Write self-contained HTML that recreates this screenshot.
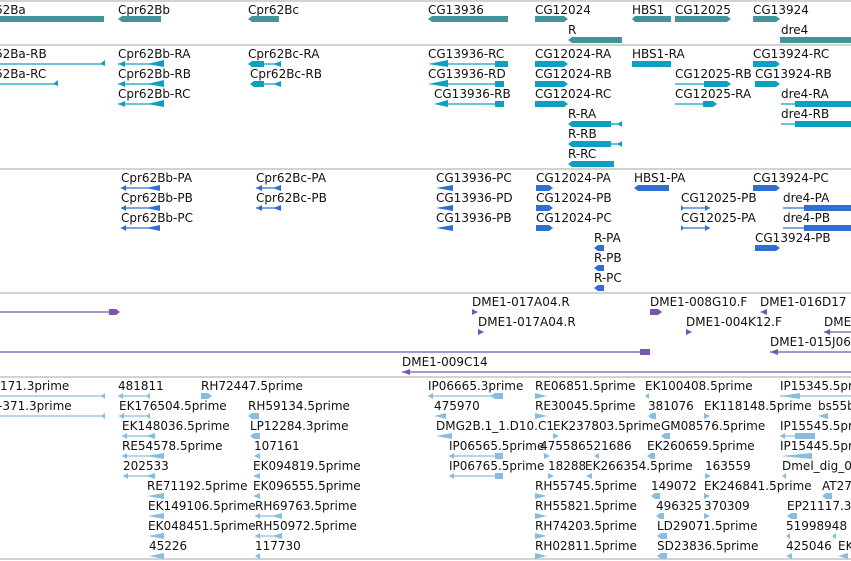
<!DOCTYPE html>
<html><head><meta charset="utf-8"><style>
html,body{margin:0;padding:0;background:#fff;width:851px;height:561px;overflow:hidden}
svg{display:block}
text{font-family:"DejaVu Sans","Liberation Sans",sans-serif;font-size:12px;fill:#111}
.g{fill:#43939a}.t{fill:#0da0c0}.p{fill:#2f6fd4}.v{fill:#7755b0}.e{fill:#88bde0}
.tl{stroke:#0da0c0;stroke-width:1.3}.pl{stroke:#2f6fd4;stroke-width:1.3}.vl{stroke:#7755b0;stroke-width:1.3}.el{stroke:#88bde0;stroke-width:1.3}
.s{stroke:#c4c4c4;stroke-width:1.5}
</style></head><body>
<svg width="851" height="561" viewBox="0 0 851 561">
<line class="s" x1="0" y1="1" x2="851" y2="1"/>
<line class="s" x1="0" y1="45" x2="851" y2="45"/>
<line class="s" x1="0" y1="169" x2="851" y2="169"/>
<line class="s" x1="0" y1="293" x2="851" y2="293"/>
<line class="s" x1="0" y1="377" x2="851" y2="377"/>
<line class="s" x1="0" y1="559" x2="851" y2="559"/>

<!-- Track 1 genes -->
<text x="-26" y="14">Cpr62Ba</text><rect class="g" x="0" y="16" width="104" height="6"/>
<text x="118" y="14">Cpr62Bb</text><polygon class="g" points="118,19 122,16 161,16 161,22 122,22"/>
<text x="248" y="14">Cpr62Bc</text><polygon class="g" points="248,19 252,16 279,16 279,22 252,22"/>
<text x="428" y="14">CG13936</text><polygon class="g" points="428,19 432,16 508,16 508,22 432,22"/>
<text x="535" y="14">CG12024</text><polygon class="g" points="535,16 564,16 568,19 564,22 535,22"/>
<text x="568" y="34">R</text><polygon class="g" points="568,40 572,37 622,37 622,43 572,43"/>
<text x="632" y="14">HBS1</text><polygon class="g" points="632,19 635,16 671,16 671,22 635,22"/>
<text x="675" y="14">CG12025</text><polygon class="g" points="675,16 727,16 731,19 727,22 675,22"/>
<text x="753" y="14">CG13924</text><polygon class="g" points="753,16 776,16 780,19 776,22 753,22"/>
<text x="781" y="34">dre4</text><rect class="g" x="780" y="37" width="71" height="6"/>

<!-- Track 2 transcripts -->
<text x="-26" y="58">Cpr62Ba-RB</text><line class="tl" x1="0" y1="64" x2="104" y2="64"/><polygon class="t" points="100,64 105,60 105,66"/>
<text x="-26" y="78">Cpr62Ba-RC</text><line class="tl" x1="0" y1="84" x2="57" y2="84"/><polygon class="t" points="53,84 58,80 58,86"/>
<text x="118" y="58">Cpr62Bb-RA</text><line class="tl" x1="118" y1="64" x2="164" y2="64"/><polygon class="t" points="118,64 125,61 125,67"/><polygon class="t" points="147,64 164,60 164,67"/>
<text x="118" y="78">Cpr62Bb-RB</text><line class="tl" x1="118" y1="84" x2="164" y2="84"/><polygon class="t" points="118,84 125,81 125,87"/><polygon class="t" points="147,84 164,80 164,87"/>
<text x="118" y="98">Cpr62Bb-RC</text><line class="tl" x1="118" y1="104" x2="164" y2="104"/><polygon class="t" points="118,104 125,101 125,107"/><polygon class="t" points="147,104 164,100 164,107"/>
<text x="248" y="58">Cpr62Bc-RA</text><polygon class="t" points="248,64 252,61 264,61 264,67 252,67"/><line class="tl" x1="264" y1="64" x2="281" y2="64"/><polygon class="t" points="273,64 281,61 281,67"/>
<text x="250" y="78">Cpr62Bc-RB</text><polygon class="t" points="250,84 254,81 264,81 264,87 254,87"/><line class="tl" x1="264" y1="84" x2="281" y2="84"/><polygon class="t" points="273,84 281,81 281,87"/>
<text x="428" y="58">CG13936-RC</text><polygon class="t" points="428,64 448,60 448,67"/><line class="tl" x1="448" y1="64" x2="495" y2="64"/><rect class="t" x="495" y="61" width="13" height="6"/>
<text x="428" y="78">CG13936-RD</text><polygon class="t" points="428,84 448,80 448,87"/><line class="tl" x1="448" y1="84" x2="495" y2="84"/><rect class="t" x="495" y="81" width="9" height="6"/>
<text x="434" y="98">CG13936-RB</text><polygon class="t" points="434,104 448,100 448,107"/><line class="tl" x1="448" y1="104" x2="495" y2="104"/><rect class="t" x="495" y="101" width="9" height="6"/>
<text x="535" y="58">CG12024-RA</text><polygon class="t" points="535,61 564,61 568,64 564,67 535,67"/>
<text x="535" y="78">CG12024-RB</text><polygon class="t" points="535,81 564,81 568,84 564,87 535,87"/>
<text x="535" y="98">CG12024-RC</text><polygon class="t" points="535,101 564,101 568,104 564,107 535,107"/>
<text x="568" y="118">R-RA</text><polygon class="t" points="568,124 572,121 611,121 611,127 572,127"/><line class="tl" x1="611" y1="124" x2="622" y2="124"/><polygon class="t" points="617,124 622,121 622,127"/>
<text x="568" y="138">R-RB</text><polygon class="t" points="568,144 572,141 611,141 611,147 572,147"/><line class="tl" x1="611" y1="144" x2="622" y2="144"/><polygon class="t" points="617,144 622,141 622,147"/>
<text x="568" y="158">R-RC</text><polygon class="t" points="568,164 572,161 614,161 614,167 572,167"/>
<text x="632" y="58">HBS1-RA</text><rect class="t" x="632" y="61" width="39" height="6"/>
<text x="675" y="78">CG12025-RB</text><line class="tl" x1="675" y1="84" x2="704" y2="84"/><polygon class="t" points="704,81 727,81 731,84 727,87 704,87"/>
<text x="675" y="98">CG12025-RA</text><line class="tl" x1="675" y1="104" x2="703" y2="104"/><polygon class="t" points="703,101 713,101 717,104 713,107 703,107"/>
<text x="753" y="58">CG13924-RC</text><polygon class="t" points="753,61 776,61 780,64 776,67 753,67"/>
<text x="755" y="78">CG13924-RB</text><polygon class="t" points="755,81 776,81 780,84 776,87 755,87"/>
<text x="781" y="98">dre4-RA</text><line class="tl" x1="781" y1="104" x2="851" y2="104"/><rect class="t" x="795" y="101" width="56" height="6"/>
<text x="781" y="118">dre4-RB</text><line class="tl" x1="781" y1="124" x2="851" y2="124"/><rect class="t" x="795" y="121" width="56" height="6"/>

<!-- Track 3 proteins -->
<text x="121" y="182">Cpr62Bb-PA</text><line class="pl" x1="121" y1="188" x2="160" y2="188"/><polygon class="p" points="121,188 126,185 126,191"/><polygon class="p" points="146,188 160,185 160,191"/>
<text x="121" y="202">Cpr62Bb-PB</text><line class="pl" x1="121" y1="208" x2="160" y2="208"/><polygon class="p" points="121,208 126,205 126,211"/><polygon class="p" points="146,208 160,205 160,211"/>
<text x="121" y="222">Cpr62Bb-PC</text><line class="pl" x1="121" y1="228" x2="160" y2="228"/><polygon class="p" points="121,228 126,225 126,231"/><polygon class="p" points="146,228 160,225 160,231"/>
<text x="256" y="182">Cpr62Bc-PA</text><line class="pl" x1="256" y1="188" x2="281" y2="188"/><polygon class="p" points="256,188 262,185 262,191"/><polygon class="p" points="273,188 281,185 281,191"/>
<text x="256" y="202">Cpr62Bc-PB</text><line class="pl" x1="256" y1="208" x2="281" y2="208"/><polygon class="p" points="256,208 262,205 262,211"/><polygon class="p" points="273,208 281,205 281,211"/>
<text x="436" y="182">CG13936-PC</text><polygon class="p" points="436,188 453,185 453,191"/>
<text x="436" y="202">CG13936-PD</text><polygon class="p" points="436,208 453,205 453,211"/>
<text x="436" y="222">CG13936-PB</text><polygon class="p" points="436,228 453,225 453,231"/>
<text x="536" y="182">CG12024-PA</text><polygon class="p" points="536,185 549,185 553,188 549,191 536,191"/>
<text x="536" y="202">CG12024-PB</text><polygon class="p" points="536,205 549,205 553,208 549,211 536,211"/>
<text x="536" y="222">CG12024-PC</text><polygon class="p" points="536,225 549,225 553,228 549,231 536,231"/>
<text x="594" y="242">R-PA</text><polygon class="p" points="594,248 598,245 604,245 604,251 598,251"/>
<text x="594" y="262">R-PB</text><polygon class="p" points="594,268 598,265 604,265 604,271 598,271"/>
<text x="594" y="282">R-PC</text><polygon class="p" points="594,288 598,285 604,285 604,291 598,291"/>
<text x="634" y="182">HBS1-PA</text><polygon class="p" points="634,188 638,185 669,185 669,191 638,191"/>
<text x="681" y="202">CG12025-PB</text><line class="pl" x1="681" y1="208" x2="710" y2="208"/><polygon class="p" points="681,205 684,208 681,211"/><polygon class="p" points="705,205 710,208 705,211"/>
<text x="681" y="222">CG12025-PA</text><line class="pl" x1="681" y1="228" x2="710" y2="228"/><polygon class="p" points="681,225 684,228 681,231"/><polygon class="p" points="705,225 710,228 705,231"/>
<text x="753" y="182">CG13924-PC</text><polygon class="p" points="753,185 776,185 780,188 776,191 753,191"/>
<text x="783" y="202">dre4-PA</text><line class="pl" x1="783" y1="208" x2="851" y2="208"/><rect class="p" x="804" y="205" width="47" height="6"/>
<text x="783" y="222">dre4-PB</text><line class="pl" x1="783" y1="228" x2="851" y2="228"/><rect class="p" x="804" y="225" width="47" height="6"/>
<text x="755" y="242">CG13924-PB</text><polygon class="p" points="755,245 776,245 780,248 776,251 755,251"/>

<!-- Track 4 purple -->
<line class="vl" x1="0" y1="312" x2="115" y2="312"/><polygon class="v" points="109,309 116,309 120,312 116,315 109,315"/>
<text x="472" y="306">DME1-017A04.R</text><polygon class="v" points="472,309 478,312 472,315"/>
<text x="478" y="326">DME1-017A04.R</text><polygon class="v" points="478,329 484,332 478,335"/>
<text x="650" y="306">DME1-008G10.F</text><polygon class="v" points="650,309 658,309 662,312 658,315 650,315"/>
<text x="760" y="306">DME1-016D17</text><polygon class="v" points="760,312 767,309 767,315"/>
<text x="686" y="326">DME1-004K12.F</text><polygon class="v" points="686,329 692,332 686,335"/>
<text x="824" y="326">DME1-015J06</text><line class="vl" x1="824" y1="332" x2="851" y2="332"/><polygon class="v" points="824,332 830,329 830,335"/>
<line class="vl" x1="0" y1="352" x2="645" y2="352"/><polygon class="v" points="640,349 650,349 650,355 640,355"/>
<text x="770" y="346">DME1-015J06</text><line class="vl" x1="770" y1="352" x2="851" y2="352"/><polygon class="v" points="770,352 778,349 778,355"/>
<text x="402" y="366">DME1-009C14</text><line class="vl" x1="402" y1="372" x2="851" y2="372"/><polygon class="v" points="402,372 410,369 410,375"/>

<!-- Track 5 ESTs -->
<text x="0" y="390">171.3prime</text><line class="el" x1="0" y1="396" x2="105" y2="396"/><polygon class="e" points="101,396 105,393 105,399"/>
<text x="-2" y="410">-371.3prime</text><line class="el" x1="0" y1="416" x2="105" y2="416"/><polygon class="e" points="101,416 105,413 105,419"/>
<text x="118" y="390">481811</text><line class="el" x1="118" y1="396" x2="150" y2="396"/><polygon class="e" points="118,396 123,393 123,399"/><polygon class="e" points="146,396 150,393 150,399"/>
<text x="119" y="410">EK176504.5prime</text><line class="el" x1="119" y1="416" x2="150" y2="416"/><polygon class="e" points="119,416 124,413 124,419"/><polygon class="e" points="146,416 150,413 150,419"/>
<text x="122" y="430">EK148036.5prime</text><line class="el" x1="122" y1="436" x2="155" y2="436"/><polygon class="e" points="122,436 127,433 127,439"/><polygon class="e" points="146,436 155,433 155,439"/>
<text x="122" y="450">RE54578.5prime</text><line class="el" x1="122" y1="456" x2="164" y2="456"/><polygon class="e" points="122,456 127,453 127,459"/><polygon class="e" points="146,456 164,453 164,459"/>
<text x="123" y="470">202533</text><line class="el" x1="123" y1="476" x2="155" y2="476"/><polygon class="e" points="123,476 128,473 128,479"/><polygon class="e" points="146,476 155,473 155,479"/>
<text x="147" y="490">RE71192.5prime</text><polygon class="e" points="147,496 164,493 164,499"/>
<text x="148" y="510">EK149106.5prime</text><polygon class="e" points="148,516 164,513 164,519"/>
<text x="148" y="530">EK048451.5prime</text><polygon class="e" points="148,536 164,533 164,539"/>
<text x="149" y="550">45226</text><polygon class="e" points="149,556 164,553 164,559"/>
<text x="201" y="390">RH72447.5prime</text><polygon class="e" points="201,393 208,393 212,396 208,399 201,399"/>
<text x="248" y="410">RH59134.5prime</text><polygon class="e" points="248,416 252,413 259,413 259,419 252,419"/>
<text x="250" y="430">LP12284.3prime</text><polygon class="e" points="250,436 254,433 260,433 260,439 254,439"/>
<text x="254" y="450">107161</text><polygon class="e" points="254,456 260,453 260,459"/>
<text x="253" y="470">EK094819.5prime</text><polygon class="e" points="253,476 260,473 260,479"/>
<text x="253" y="490">EK096555.5prime</text><polygon class="e" points="253,496 260,493 260,499"/>
<text x="255" y="510">RH69763.5prime</text><line class="el" x1="255" y1="516" x2="282" y2="516"/><polygon class="e" points="255,516 260,513 260,519"/><polygon class="e" points="272,516 282,513 282,519"/>
<text x="255" y="530">RH50972.5prime</text><line class="el" x1="255" y1="536" x2="282" y2="536"/><polygon class="e" points="255,536 260,533 260,539"/><polygon class="e" points="272,536 282,533 282,539"/>
<text x="255" y="550">117730</text><polygon class="e" points="255,556 260,553 260,559"/>
<text x="428" y="390">IP06665.3prime</text><line class="el" x1="428" y1="396" x2="503" y2="396"/><polygon class="e" points="428,396 433,393 433,399"/><polygon class="e" points="490,396 495,393 503,393 503,399 495,399"/>
<text x="434" y="410">475970</text><polygon class="e" points="434,416 446,413 446,419"/>
<text x="436" y="430">DMG2B.1_1.D10.C1</text><polygon class="e" points="436,436 452,433 452,439"/>
<text x="449" y="450">IP06565.5prime</text><line class="el" x1="449" y1="456" x2="503" y2="456"/><polygon class="e" points="449,456 454,453 454,459"/><rect class="e" x="495" y="453" width="8" height="6"/>
<text x="449" y="470">IP06765.5prime</text><line class="el" x1="449" y1="476" x2="503" y2="476"/><polygon class="e" points="449,476 454,473 454,479"/><rect class="e" x="495" y="473" width="8" height="6"/>
<text x="535" y="390">RE06851.5prime</text><polygon class="e" points="535,393 547,396 535,399"/>
<text x="535" y="410">RE30045.5prime</text><polygon class="e" points="535,413 547,416 535,419"/>
<text x="553" y="430">EK237803.5prime</text><polygon class="e" points="553,433 559,436 553,439"/>
<text x="540" y="450">475586521686</text><polygon class="e" points="544,453 550,456 544,459"/><polygon class="e" points="594,456 599,453 599,459"/>
<text x="548" y="470">18288</text><polygon class="e" points="548,473 554,476 548,479"/>
<text x="585" y="470">EK266354.5prime</text><polygon class="e" points="586,476 592,473 592,479"/>
<text x="535" y="490">RH55745.5prime</text><polygon class="e" points="535,493 547,496 535,499"/>
<text x="535" y="510">RH55821.5prime</text><polygon class="e" points="535,513 547,516 535,519"/>
<text x="535" y="530">RH74203.5prime</text><polygon class="e" points="535,533 547,536 535,539"/>
<text x="535" y="550">RH02811.5prime</text><polygon class="e" points="535,553 547,556 535,559"/>
<text x="645" y="390">EK100408.5prime</text><polygon class="e" points="645,396 649,393 649,399"/>
<text x="648" y="410">381076</text><polygon class="e" points="648,416 652,413 656,413 656,419 652,419"/>
<text x="704" y="410">EK118148.5prime</text><polygon class="e" points="704,413 710,416 704,419"/>
<text x="661" y="430">GM08576.5prime</text><polygon class="e" points="661,436 665,433 670,433 670,439 665,439"/>
<text x="647" y="450">EK260659.5prime</text><polygon class="e" points="647,456 651,453 655,453 655,459 651,459"/>
<text x="705" y="470">163559</text><polygon class="e" points="705,473 711,476 705,479"/>
<text x="651" y="490">149072</text><polygon class="e" points="651,496 655,493 660,493 660,499 655,499"/>
<text x="704" y="490">EK246841.5prime</text><polygon class="e" points="704,493 710,496 704,499"/>
<text x="656" y="510">496325</text><polygon class="e" points="656,516 660,513 664,513 664,519 660,519"/>
<text x="704" y="510">370309</text><polygon class="e" points="704,513 710,516 704,519"/>
<text x="657" y="530">LD29071.5prime</text><polygon class="e" points="657,536 661,533 667,533 667,539 661,539"/>
<text x="657" y="550">SD23836.5prime</text><polygon class="e" points="657,556 661,553 667,553 667,559 661,559"/>
<text x="780" y="390">IP15345.5prime</text><line class="el" x1="780" y1="396" x2="851" y2="396"/><polygon class="e" points="780,396 800,393 800,399"/>
<text x="818" y="410">bs55b</text><polygon class="e" points="818,416 828,413 828,419"/>
<text x="780" y="430">IP15545.5prime</text><line class="el" x1="780" y1="436" x2="815" y2="436"/><polygon class="e" points="780,436 785,433 785,439"/><rect class="e" x="795" y="433" width="20" height="6"/>
<text x="780" y="450">IP15445.5prime</text><polygon class="e" points="780,456 812,453 812,459"/>
<text x="782" y="470">Dmel_dig_0</text><polygon class="e" points="782,476 786,473 786,479"/>
<text x="822" y="490">AT27</text><polygon class="e" points="822,496 826,493 832,493 832,499 826,499"/>
<text x="787" y="510">EP21117.3</text><polygon class="e" points="787,516 791,513 797,513 797,519 791,519"/>
<text x="786" y="530">51998948</text><polygon class="e" points="786,536 790,533 790,539"/><polygon class="e" points="832,536 836,533 836,539"/>
<text x="786" y="550">425046</text><polygon class="e" points="786,556 792,553 792,559"/>
<text x="838" y="550">EK</text><polygon class="e" points="838,556 848,553 848,559"/>
</svg>
</body></html>
